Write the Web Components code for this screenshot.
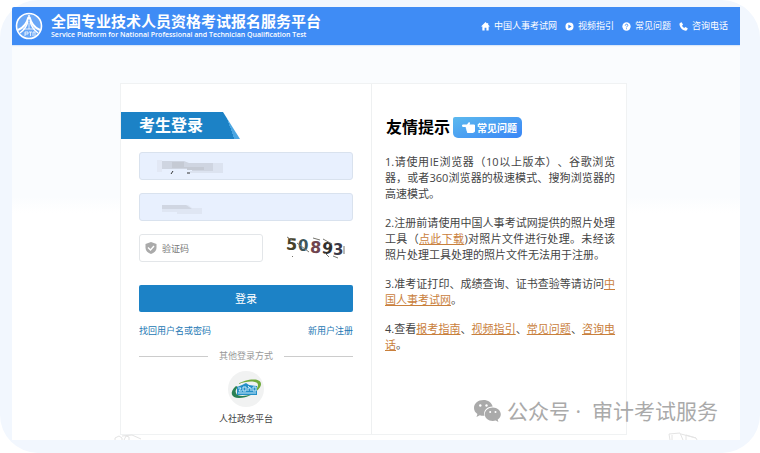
<!DOCTYPE html>
<html lang="zh-CN">
<head>
<meta charset="UTF-8">
<meta name="viewport" content="width=device-width, initial-scale=1.0">
<title>全国专业技术人员资格考试报名服务平台</title>
<style>
    body {
        margin: 0;
        background: #fff;
        color: #444;
        font-family: "Open Sans", "Noto Sans CJK SC", sans-serif;
        font-size: 9px;
        line-height: 12px;
    }
</style>
</head>
<body>
<exam-page>
    <site-header slot="header">
        <nav-link icon="home">中国人事考试网</nav-link>
        <nav-link icon="play">视频指引</nav-link>
        <nav-link icon="help">常见问题</nav-link>
        <nav-link icon="phone">咨询电话</nav-link>
    </site-header>
    <login-panel></login-panel>
    <tips-panel>
        <p>1.请使用IE浏览器（10以上版本）、谷歌浏览器，或者360浏览器的极速模式、搜狗浏览器的高速模式。</p>
        <p>2.注册前请使用中国人事考试网提供的照片处理工具（<a href="#download">点此下载</a>)对照片文件进行处理。未经该照片处理工具处理的照片文件无法用于注册。</p>
        <p>3.准考证打印、成绩查询、证书查验等请访问<a href="#cpta">中国人事考试网</a>。</p>
        <p>4.查看<a href="#guide">报考指南</a>、<a href="#video">视频指引</a>、<a href="#faq">常见问题</a>、<a href="#phone">咨询电话</a>。</p>
    </tips-panel>
    <account-mark slot="mark">公众号 ·&nbsp; 审计考试服务</account-mark>
</exam-page>

<script>
    class ExamPage extends HTMLElement {
        connectedCallback() {
            this.attachShadow({ mode: 'open' });
            this.shadowRoot.innerHTML = `
                <style>
                    :host {
                        display: flex;
                        box-sizing: border-box;
                        min-height: 100vh;
                        padding: 7px 20px 13px 12px;
                        background: #f2f7fe;
                        border-radius: 38px;
                    }
                    .screen {
                        position: relative;
                        flex: 1;
                        overflow: hidden;
                        border-radius: 2px 0 0 0;
                        background: linear-gradient(#fafcfe 190px, #fff 206px);
                    }
                    main {
                        padding: 38px 113px 5px 108px;
                    }
                    .card {
                        display: grid;
                        grid-template-columns: 252fr 255fr;
                        background: #fff;
                        border: 1px solid #f0f2f3;
                        box-sizing: border-box;
                    }
                    .doodle {
                        position: absolute;
                        bottom: 0;
                        fill: none;
                        stroke: #e4e4e4;
                    }
                    .left { left: 102px; }
                    .right { right: 40px; }
                    ::slotted([slot="mark"]) {
                        position: absolute;
                        right: 22px;
                        bottom: 14px;
                    }
                </style>
                <div class="screen">
                    <slot name="header"></slot>
                    <main><div class="card"><slot></slot></div></main>
                    <svg class="doodle left" width="28" height="6" viewBox="0 0 28 6"><path d="M1 6V4l4-2 3 2v2M10 6l2-4 3 1v3M8 2l10-1 9 4"/></svg>
                    <svg class="doodle right" width="32" height="8" viewBox="0 0 32 8"><path d="M2 8L1 2l11-1 3 7M4 8V3M13 2l15 4 1 2M18 8V3l10 3"/></svg>
                    <slot name="mark"></slot>
                </div>
            `;
        }
    }

    class SiteHeader extends HTMLElement {
        connectedCallback() {
            this.attachShadow({ mode: 'open' });
            this.shadowRoot.innerHTML = `
                <style>
                    :host {
                        display: block;
                        color: #fff;
                        background: #3f8cf5;
                        box-shadow: 0 1px 1px #dbe8f8;
                    }
                    header {
                        display: flex;
                        align-items: center;
                        justify-content: space-between;
                        height: 38px;
                        padding: 0 12px 0 3px;
                    }
                    .brand {
                        display: flex;
                        align-items: center;
                        gap: 8px;
                    }
                    h1, p {
                        margin: 0;
                        white-space: nowrap;
                    }
                    h1 {
                        font-size: 15px;
                        font-weight: 700;
                        line-height: 17px;
                    }
                    p {
                        font-size: 7px;
                        font-weight: 600;
                        line-height: 9px;
                    }
                    nav {
                        display: flex;
                        gap: 8px;
                    }
                </style>
                <header>
                    <div class="brand">
                        <svg width="28" height="28" viewBox="0 0 28 28" fill="none" stroke="#fff">
                            <circle cx="14" cy="14" r="12.5" stroke-width="1.6" fill="#69a7f7"/>
                            <path d="M14 3v3" stroke-width="1.6"/>
                            <path d="M13.5 5C12 11 8 16 3 18M14.5 5C16 11 20 16 25 18" stroke-width="2"/>
                            <path d="M13 9C12 14 9 18 5 21M15 9c1 5 4 9 8 12" stroke-width="1.3"/>
                            <path d="M8 17h12M14 11v6M10 20v4M10 20h3v2h-3M14 20h3M15.5 20v4M18 24v-4h2v4" stroke-width=".8"/>
                        </svg>
                        <div>
                            <h1>全国专业技术人员资格考试报名服务平台</h1>
                            <p>Service Platform for National Professional and Technician Qualification Test</p>
                        </div>
                    </div>
                    <nav><slot></slot></nav>
                </header>
            `;
        }
    }

    const navIcons = {
        home: '<path d="M5 0L0 5h1.500v4.500h2.500V6.500h2v3h2.500V5H10L8 3V1H7v1z"/>',
        play: '<path fill-rule="evenodd" d="M5 .5a4.500 4.500 0 100 9 4.500 4.500 0 000-9zM3.700 2.800L7.300 5 3.700 7.200z"/>',
        help: '<circle cx="5" cy="5" r="4.600"/><path d="M3.600 4C3.600 2 6.500 2 6.500 3.700 6.500 4.800 5 4.800 5 6M5 7v1" fill="none" stroke="#3f8cf5"/>',
        phone: '<path d="M1 1l2-.7L4.500 3 3.300 4.200c.5 1.200 1.400 2 2.500 2.500L7 5.500 9.700 7 9 9c-.6.800-2 1-3.500.2C3 8 1.300 6 .7 3.500.5 2.500.5 1.500 1 1z"/>'
    };

    class NavLink extends HTMLElement {
        connectedCallback() {
            const icon = this.getAttribute('icon');
            this.attachShadow({ mode: 'open' });
            this.shadowRoot.innerHTML = `
                <style>
                    :host { display: block; }
                    a {
                        display: flex;
                        align-items: center;
                        gap: 4px;
                        color: inherit;
                        text-decoration: none;
                        white-space: nowrap;
                    }
                    svg { fill: #fff; }
                </style>
                <a href="#${icon}"><svg width="9" height="9" viewBox="0 0 10 10">${navIcons[icon]}</svg><slot></slot></a>
            `;
        }
    }

    class LoginPanel extends HTMLElement {
        connectedCallback() {
            this.attachShadow({ mode: 'open' });
            this.shadowRoot.innerHTML = `
                <style>
                    :host {
                        display: block;
                        padding: 28px 0 9px;
                        border-right: 1px solid #eef0f1;
                    }
                    h2 {
                        box-sizing: border-box;
                        width: 119px;
                        margin: 0 0 13px;
                        padding-left: 18px;
                        font-size: 16px;
                        line-height: 27px;
                        color: #fff;
                        background: linear-gradient(70deg, #1c82c6 88%, #4ba6e2 88%);
                        clip-path: polygon(0 0, 102px 0, 100% 100%, 0 100%);
                    }
                    form {
                        display: flex;
                        flex-direction: column;
                        gap: 13px;
                        padding: 0 18px;
                    }
                    input {
                        box-sizing: border-box;
                        width: 100%;
                        height: 28px;
                        border: 1px solid #d9e2ee;
                        border-radius: 3px;
                        background: #e8f0fe;
                        padding: 0 22px;
                        font: inherit;
                        color: #444;
                    }
                    input::placeholder { color: #777; opacity: 1; }
                    .field { display: grid; align-items: center; }
                    .field > * { grid-area: 1 / 1; }
                    .field svg { margin-left: 6px; pointer-events: none; }
                    .check {
                        display: grid;
                        grid-template-columns: 124fr 90fr;
                    }
                    .check input {
                        background: #fff;
                        border-color: #e3e6e9;
                    }
                    .captcha {
                        justify-self: end;
                        margin-right: 7px;
                        font-family: "DejaVu Sans", sans-serif;
                        font-weight: 700;
                        font-size: 16px;
                    }
                    button {
                        height: 27px;
                        margin-top: 10px;
                        border: 0;
                        border-radius: 2px;
                        background: #1c82c6;
                        color: #fff;
                        font: inherit;
                        font-size: 11px;
                    }
                    .links {
                        display: flex;
                        justify-content: space-between;
                    }
                    a { color: #2478b4; text-decoration: none; }
                    .other {
                        display: flex;
                        align-items: center;
                        gap: 11px;
                        color: #999;
                    }
                    .other::before, .other::after {
                        content: '';
                        flex: 1;
                        height: 1px;
                        background: #ccc;
                    }
                    .platform {
                        display: flex;
                        flex-direction: column;
                        align-items: center;
                        gap: 6px;
                        margin-top: -4px;
                        color: #444;
                    }
                </style>
                <h2>考生登录</h2>
                <form>
                    <div class="field">
                        <input type="text" aria-label="用户名">
                        <svg width="90" height="24" viewBox="0 0 90 24">
                            <path d="M12 6h5v12h-5z" fill="#e2e8f5"/>
                            <path d="M17 7h22l5 2h24v8H47v-2H17z" fill="#cfd5e1"/>
                            <path d="M27 8h12v5h20v3H42v-2H27z" fill="#c5cad4"/>
                            <path d="M68 9h10v10H45v-2h23z" fill="#dce3f0"/>
                            <path d="M28 17l-2 3M42 19h3" stroke="#333" fill="none"/>
                        </svg>
                    </div>
                    <div class="field">
                        <input type="password" aria-label="密码">
                        <svg width="90" height="24" viewBox="0 0 90 24">
                            <path d="M17 10h26l4 3h10v6H32v-2H17z" fill="#dfe6f3"/>
                            <path d="M17 10h24l6 4H17z" fill="#d0d6e2"/>
                        </svg>
                    </div>
                    <div class="check">
                        <div class="field">
                            <input type="text" placeholder="验证码" aria-label="验证码">
                            <svg width="12" height="12" viewBox="0 0 12 12"><path d="M6 0l5.500 2v4c0 3-2.500 5-5.500 6C3 11 .5 9 .5 6V2z" fill="#aaa"/><path d="M3 5.500l2.500 2.500L9 4" fill="none" stroke="#fff" stroke-width="1.400"/></svg>
                        </div>
                        <svg class="captcha" width="60" height="28" viewBox="0 0 60 28" role="img" aria-label="验证码图片">
                            <text x="0" y="16" fill="#47432a" transform="rotate(4 6 11)">5</text>
                            <text x="12" y="17" fill="#3d565a" font-size="15">0</text>
                            <text x="24" y="19" fill="#70454f" transform="rotate(4 31 14)">8</text>
                            <text x="36" y="20" fill="#30302f" transform="rotate(8 42 15)">9</text>
                            <text x="47" y="21" fill="#3a3948" font-size="15">3</text>
                            <path d="M1 3l5 3M11 9l12 9M27 4l7 2M37 5l9 5M39 19l4 4M47 22l5 2M58 12v8M6 22l1 1" stroke="#77756e" fill="none"/>
                        </svg>
                    </div>
                    <button type="button">登录</button>
                    <div class="links">
                        <a href="#recover">找回用户名或密码</a>
                        <a href="#register">新用户注册</a>
                    </div>
                    <div class="other">其他登录方式</div>
                    <a class="platform" href="#platform">
                        <svg width="36" height="36" viewBox="0 0 36 36">
                            <circle cx="18" cy="18" r="18" fill="#f1f2f2"/>
                            <path d="M10 13C17 8 33 6 33 13c0 5-8 11-17 13 8-3 14-8 14-12 0-5-12-4-20-1z" fill="#6faa3b"/>
                            <path d="M8 15c-7 6-5 12 3 12 4 0 8-1 12-3-6 1-14 2-15-2-1-2 0-4 2-6z" fill="#2a8054"/>
                            <path d="M9 16l5-2 4-2 3 2 8 1v9H9z" fill="#248fc7"/>
                            <path d="M10 17h3l-2 3h3M15 16h3v4h-3zM20 15l2 2M20 20v-3h3v3M25 16h3v4h-3zM10 22h18" fill="none" stroke="#c9eafa"/>
                        </svg>
                        <span>人社政务平台</span>
                    </a>
                </form>
            `;
        }
    }

    class TipsPanel extends HTMLElement {
        connectedCallback() {
            this.attachShadow({ mode: 'open' });
            this.shadowRoot.innerHTML = `
                <style>
                    :host {
                        display: block;
                        padding: 33px 11px 0 13px;
                        font-size: 11px;
                        line-height: 16px;
                        text-align: justify;
                        text-spacing-trim: space-all;
                    }
                    .title {
                        display: flex;
                        align-items: center;
                        gap: 3px;
                        margin-bottom: 16px;
                        padding-left: 1px;
                    }
                    h2 {
                        margin: 0;
                        font-size: 16px;
                        line-height: 21px;
                        color: #000;
                    }
                    .faq {
                        display: flex;
                        align-items: center;
                        gap: 2px;
                        height: 21px;
                        padding: 0 5px 0 9px;
                        border-radius: 2px 5px 5px 5px;
                        background: linear-gradient(160deg, #5cb9ee, #3985f6);
                        color: #fff;
                        font-size: 10px;
                        font-weight: 700;
                        text-decoration: none;
                    }
                    ::slotted(p) {
                        margin: 0 0 13px;
                    }
                </style>
                <div class="title">
                    <h2>友情提示</h2>
                    <a class="faq" href="#faq">
                        <svg width="13" height="12" viewBox="0 0 13 12" fill="#fff"><path d="M0 3.500C0 2.500 1 2.500 1 2.500h4L6.500.500c1-.8 2 .2 1.500 1L7.500 2.500H12c1 0 1 1 1 1V9c0 1-1 1.500-2 2H6.500C5 11 4.500 10 5 9c-1-.5-1-1.500-.5-2C3.500 6.500 3.500 5.500 4 5H1S0 4.500 0 3.500z"/></svg>
                        <span>常见问题</span>
                    </a>
                </div>
                <slot></slot>
            `;
            this.querySelectorAll('a').forEach(link => {
                link.style.color = '#c9803c';
            });
        }
    }

    class AccountMark extends HTMLElement {
        connectedCallback() {
            this.attachShadow({ mode: 'open' });
            this.shadowRoot.innerHTML = `
                <style>
                    :host {
                        display: flex;
                        align-items: center;
                        gap: 6px;
                        font-size: 21px;
                        line-height: 30px;
                        color: #aaa;
                        white-space: nowrap;
                    }
                </style>
                <svg width="27" height="22" viewBox="0 0 27 22" fill="#aaa">
                    <path d="M9.500 0C4 0 0 3.500 0 8c0 2.500 1.300 4.600 3.400 6l-.9 3 3.300-1.700c1.400.4 3 .6 4.700.5C9 10.500 13 6.500 18.700 6.500 17.800 2.700 14 0 9.500 0z"/>
                    <path d="M18.800 7.500c-4.600 0-8 3-8 6.800s3.400 6.700 8 6.700c1 0 2-.2 2.900-.5l2.700 1.500-.7-2.500c2-1.300 3.100-3 3.100-5.200 0-3.800-3.500-6.800-8-6.800z"/>
                    <g fill="#fff"><circle cx="6.300" cy="5.500" r="1.200"/><circle cx="12.500" cy="5.500" r="1.200"/><circle cx="16.200" cy="12" r="1"/><circle cx="21.500" cy="12" r="1"/></g>
                </svg>
                <span><slot></slot></span>
            `;
        }
    }

    customElements.define('exam-page', ExamPage);
    customElements.define('site-header', SiteHeader);
    customElements.define('nav-link', NavLink);
    customElements.define('login-panel', LoginPanel);
    customElements.define('tips-panel', TipsPanel);
    customElements.define('account-mark', AccountMark);
</script>
</body>
</html>
